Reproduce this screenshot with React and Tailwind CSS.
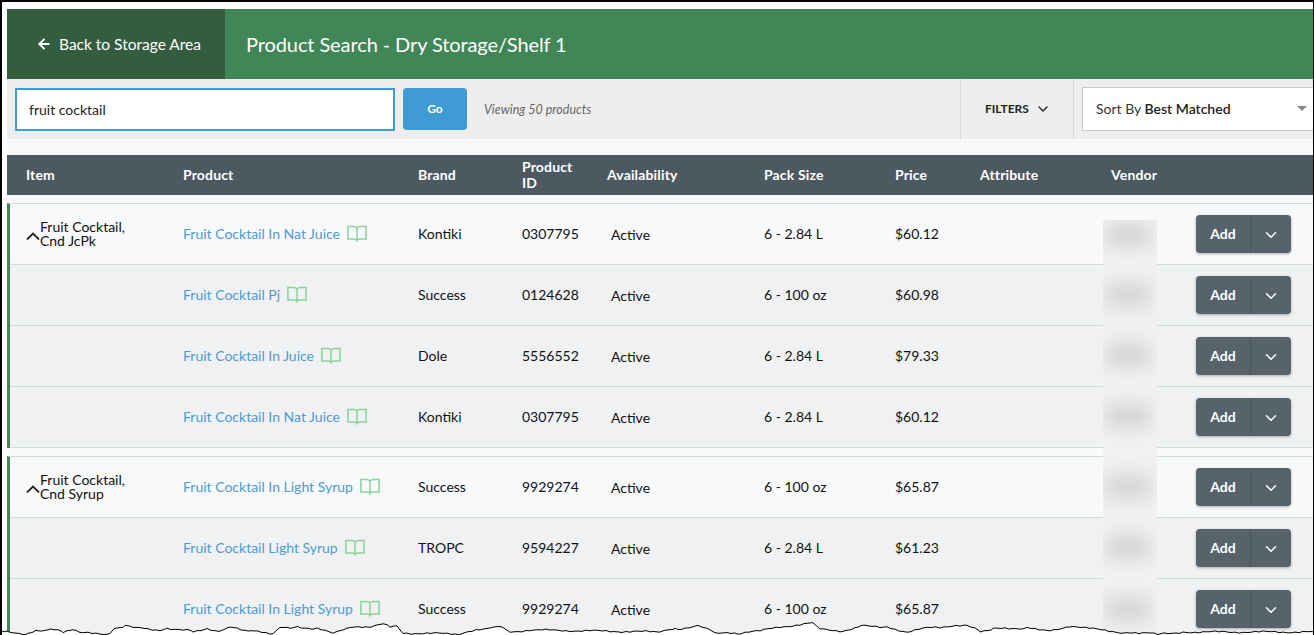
import { ArrowLeft, ChevronDown } from "lucide-react";

const rowGrid = "grid grid-cols-[173px_235px_104px_85px_157px_131px_85px_131px_85px_1fr] items-center";

const groups = [
  {
    item: ["Fruit Cocktail,", "Cnd JcPk"],
    rows: [
      { product: "Fruit Cocktail In Nat Juice", brand: "Kontiki", id: "0307795", pack: "6 - 2.84 L", price: "$60.12" },
      { product: "Fruit Cocktail Pj", brand: "Success", id: "0124628", pack: "6 - 100 oz", price: "$60.98" },
      { product: "Fruit Cocktail In Juice", brand: "Dole", id: "5556552", pack: "6 - 2.84 L", price: "$79.33" },
      { product: "Fruit Cocktail In Nat Juice", brand: "Kontiki", id: "0307795", pack: "6 - 2.84 L", price: "$60.12" },
    ],
  },
  {
    item: ["Fruit Cocktail,", "Cnd Syrup"],
    rows: [
      { product: "Fruit Cocktail In Light Syrup", brand: "Success", id: "9929274", pack: "6 - 100 oz", price: "$65.87" },
      { product: "Fruit Cocktail Light Syrup", brand: "TROPC", id: "9594227", pack: "6 - 2.84 L", price: "$61.23" },
      { product: "Fruit Cocktail In Light Syrup", brand: "Success", id: "9929274", pack: "6 - 100 oz", price: "$65.87" },
    ],
  },
];

// torn paper edge along the bottom of the screenshot
const tear = [
  [0, 630], [7, 632], [28, 634], [37, 631], [50, 629], [63, 632], [72, 629], [80, 633], [110, 634],
  [115, 628], [125, 626], [140, 628], [160, 630], [167, 628], [193, 631], [207, 629], [220, 631],
  [233, 627], [250, 631], [273, 634], [280, 628], [290, 628], [300, 627], [317, 629], [335, 633],
  [350, 628], [367, 627], [383, 624], [390, 627], [397, 626], [403, 633], [460, 634], [490, 628],
  [503, 627], [510, 632], [530, 630], [660, 632], [677, 629], [698, 626], [708, 629], [715, 633],
  [737, 634], [760, 631], [780, 627], [813, 623], [820, 629], [843, 631], [860, 626], [887, 627],
  [907, 632], [927, 628], [940, 627], [967, 626], [980, 631], [993, 629], [1027, 628], [1050, 630],
  [1073, 626], [1093, 629], [1127, 633], [1150, 632], [1160, 634], [1183, 632], [1314, 632],
];

// break each segment up so the line looks rough
const roughTear = [];
tear.forEach(([x, y], i) => {
  const next = tear[i + 1];
  if (!next) return roughTear.push([x, y]);
  for (let px = x; px < next[0]; px += 4) {
    const t = (px - x) / (next[0] - x);
    const jitter = Math.sin(px * 1.7) * 0.7 + Math.sin(px * 0.63) * 0.5;
    roughTear.push([px, y + (next[1] - y) * t + jitter]);
  }
});
const tearPoints = roughTear.map(([x, y]) => `${x},${(y - 560).toFixed(1)}`).join(" ");

const blurCenters = [235, 295, 355, 416, 487, 547, 609];

function BookIcon() {
  return (
    <svg className="w-[20px] h-[17px] shrink-0" viewBox="0 0 20 17" fill="none" stroke="#8ad29a" strokeWidth="1.5">
      <path d="M10 3.2C9.2 2 8 1.5 6.5 1.5H.9V14H7c1.5 0 2.5.4 3 1.6c.5-1.2 1.5-1.6 3-1.6h6.100V1.500H13.500C12 1.500 10.800 2 10 3.200V15.500" />
    </svg>
  );
}

function GroupRow({ row, index, item }) {
  return (
    <div className={`${rowGrid} h-[61px] pb-[2px] border-b border-[#d3dade] ${index === 0 ? "bg-[#f8f9fb]" : "bg-[#f0f1f3]"} text-[14px] text-[#111]`}>
      <div className="pl-[16px]">
        {item && (
          <div className="flex items-center mt-[2px]">
            <svg className="w-[14px] h-[8px] shrink-0 mt-[3px]" viewBox="0 0 14 8" fill="none" stroke="#222" strokeWidth="1.8">
              <path d="M1 7.500L7 1.500L13 7.500" />
            </svg>
            <span className="leading-[14px] -mt-[1px]">{item[0]}<br />{item[1]}</span>
          </div>
        )}
      </div>
      <div className="flex items-center gap-[7px] text-[#4e9ad4]">
        <span>{row.product}</span>
        <BookIcon />
      </div>
      <div>{row.brand}</div>
      <div>{row.id}</div>
      <div className="pl-[4px] pt-[2px]">Active</div>
      <div>{row.pack}</div>
      <div>{row.price}</div>
      <div />
      <div />
      <div className="flex mt-[2px]">
        <div className="flex h-[38px] rounded-[4px] bg-[#56636b] text-white shadow-[0_1px_3px_rgba(0,0,0,0.3)]">
          <button className="w-[55px] pb-[2px] border-r border-[#4c5860] text-[14px] font-bold">Add</button>
          <button className="w-[40px] pt-[1px] flex items-center justify-center">
            <ChevronDown className="w-[18px] h-[18px]" strokeWidth={2} />
          </button>
        </div>
      </div>
    </div>
  );
}

export default function App() {
  return (
    <div className="relative w-[1314px] h-[635px] overflow-hidden bg-white border-l-2 border-t-2 border-r border-black font-['Lato','Noto_Sans',sans-serif]">
      <div className="absolute inset-0 left-[5px] top-[7px] bg-[#f8f9fb]" />
      <div className="relative ml-[5px] mt-[7px]">
        {/* Title bar */}
        <div className="flex h-[70px] bg-[#408656] text-white">
          <div className="w-[218px] bg-[#345c3e] flex items-center pl-[29px] gap-[7px] text-[15.5px]">
            <ArrowLeft className="w-[16px] h-[16px]" strokeWidth={2.75} />
            <span className="pt-[2px]">Back to Storage Area</span>
          </div>
          <div className="pl-[21px] flex items-center text-[20px] tracking-[-0.1px]">Product Search - Dry Storage/Shelf 1</div>
        </div>

        {/* Search bar */}
        <div className="flex h-[60px] bg-[#eeeeee]">
          <div className="flex items-center flex-1 pl-[8px]">
            <div className="w-[380px] h-[43px] border-2 border-[#3f9bd3] bg-white flex items-center pl-[12px] text-[14px] text-[#222]">fruit cocktail</div>
            <button className="ml-[8px] w-[64px] h-[42px] rounded-[4px] bg-[#3f9bd3] text-white text-[12px] font-bold">Go</button>
            <span className="ml-[17px] pt-[2px] text-[12.500px] italic text-[#666]">Viewing 50 products</span>
          </div>
          <div className="w-[114px] border-x border-[#d3dade] flex items-center pl-[24px] gap-[6px] text-[12px] font-bold text-[#222]">
            <span>FILTERS</span>
            <ChevronDown className="w-[16px] h-[16px]" strokeWidth={2} />
          </div>
          <div className="w-[239px] pl-[8px] flex items-center">
            <div className="flex-1 h-[44px] border border-[#c9c9c9] border-r-0 bg-white flex items-center justify-between pl-[13px] pr-[6px] text-[14px] text-[#333] pb-[2px]">
              <span>Sort By <span className="font-semibold text-[#222]">Best Matched</span></span>
              <span className="w-0 h-0 border-x-[5px] border-x-transparent border-t-[5px] border-t-[#888]" />
            </div>
          </div>
        </div>

        {/* Table header */}
        <div className={`${rowGrid} mt-[16px] h-[40px] pb-[2px] bg-[#4d5961] text-white text-[14px] font-bold tracking-[0.15px] pl-[3px]`}>
          <div className="pl-[16px]">Item</div>
          <div>Product</div>
          <div>Brand</div>
          <div className="leading-[16px] pt-[2px]">Product<br />ID</div>
          <div>Availability</div>
          <div>Pack Size</div>
          <div>Price</div>
          <div>Attribute</div>
          <div>Vendor</div>
          <div />
        </div>

        {/* Result groups */}
        <div className="mt-[8px] flex flex-col gap-[8px]">
          {groups.map((g, i) => (
            <div key={i} className="border-t border-[#d3dade] border-l-[3px] border-l-[#408656]">
              {g.rows.map((row, j) => (
                <GroupRow key={j} row={row} index={j} item={j === 0 ? g.item : null} />
              ))}
            </div>
          ))}
        </div>
      </div>

      {/* Blurred-out vendor column */}
      <div className="absolute left-[1101px] top-[218px] w-[54px] h-[415px] bg-[#f1f2f3] overflow-hidden">
        {blurCenters.map((y) => (
          <div key={y} className="absolute left-[2px] w-[46px] h-[22px] bg-[#d0d0d0] blur-[10px]" style={{ top: y - 220 - 11 }} />
        ))}
      </div>

      <svg className="absolute left-[-2px] top-[558px] w-[1314px] h-[75px]" viewBox="0 0 1314 75">
        <polygon points={`${tearPoints} 1314,75 0,75`} fill="#fff" />
        <polyline points={tearPoints} fill="none" stroke="#000" strokeWidth="1" />
      </svg>
    </div>
  );
}
